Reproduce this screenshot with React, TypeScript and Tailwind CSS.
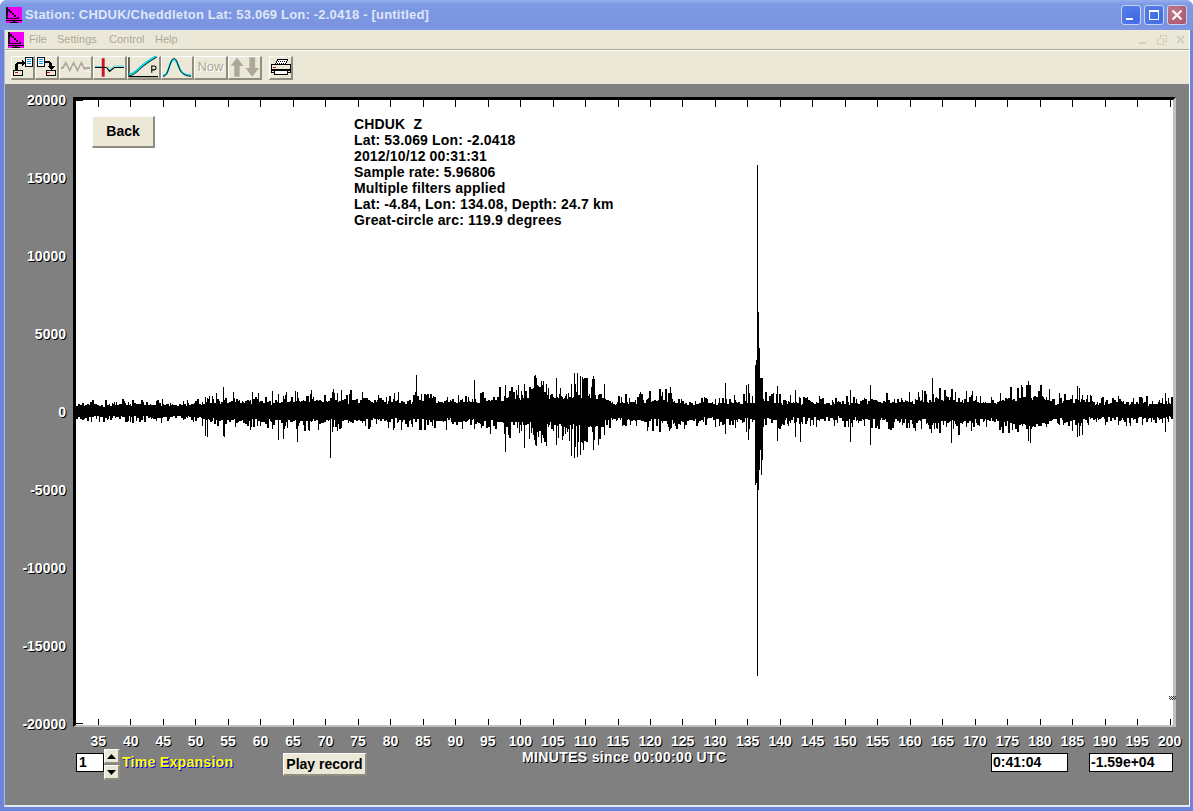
import React, { useMemo } from 'react';

// envelope control points: x in page px, half height in px
const ENV: [number, number][] = [
  [76, 11], [200, 13], [205, 18], [280, 20], [330, 22], [370, 20], [470, 20], [505, 28], [525, 30],
  [550, 32], [572, 34], [600, 34], [612, 16], [630, 18], [670, 24], [690, 16], [750, 18], [770, 20],
  [800, 15], [870, 18], [930, 22], [950, 26], [990, 16], [1010, 26], [1040, 30], [1055, 17], [1078, 24],
  [1090, 16], [1172, 15],
];

// hand placed peaks: x, top, bottom
const SPIKES: [number, number, number][] = [
  [205, 402, 436], [207, 398, 437], [223, 387, 436], [224, 400, 437], [278, 394, 440], [283, 396, 439],
  [297, 392, 442], [330, 398, 458], [332, 392, 432], [416, 375, 420], [474, 380, 429], [505, 385, 452],
  [524, 384, 448], [534, 376, 440], [535, 375, 445], [536, 378, 446], [541, 381, 443], [546, 384, 446],
  [556, 378, 445], [575, 384, 447], [571, 384, 456], [574, 373, 458], [577, 373, 457], [580, 376, 455],
  [583, 380, 450], [593, 376, 450], [594, 379, 440], [725, 383, 434], [746, 385, 432], [748, 384, 440],
  [755, 365, 485], [756, 360, 483], [757, 165, 676], [758, 312, 490], [759, 348, 470], [760, 378, 450],
  [761, 378, 475], [762, 378, 460], [777, 386, 441], [795, 390, 437], [800, 398, 442], [850, 390, 442],
  [870, 385, 445], [932, 378, 425], [951, 400, 443], [1000, 393, 430], [1028, 381, 441], [1030, 385, 443],
  [1077, 386, 437], [1079, 388, 436], [1082, 395, 435], [1165, 393, 432],
];

const envAt = (x: number) => {
  for (let i = 1; i < ENV.length; i++) {
    if (x <= ENV[i][0]) {
      const [x0, a0] = ENV[i - 1];
      const [x1, a1] = ENV[i];
      return a0 + ((a1 - a0) * (x - x0)) / (x1 - x0);
    }
  }
  return 15;
};

const buildTrace = () => {
  let seed = 20121012;
  const rnd = () => {
    seed = (seed + 0x6d2b79f5) | 0;
    let t = Math.imul(seed ^ (seed >>> 15), 1 | seed);
    t = (t + Math.imul(t ^ (t >>> 7), 61 | t)) ^ t;
    return ((t ^ (t >>> 14)) >>> 0) / 4294967296;
  };
  let d = '';
  let x = 76;
  while (x < 1173) {
    const env = envAt(x);
    const dense = x > 530 && x < 546 ? 8 : 0;
    const core = Math.max(5, env * 0.4) + dense;
    const side = () =>
      rnd() < 0.55
        ? core + (env - core) * Math.pow(rnd(), 1.1)
        : core * (0.8 + rnd() * 0.5) + rnd() * 2;
    const up = Math.round(side());
    const down = Math.round(side());
    const hold = rnd() < 0.45 ? 2 : 1;
    for (let i = 0; i < hold && x < 1173; i++, x++) {
      d += `M${x + 0.5} ${411 - up}V${411 + down}`;
    }
  }
  SPIKES.forEach(([sx, t, b]) => {
    d += `M${sx + 0.5} ${t}V${b}`;
  });
  return d;
};

const xLabels = Array.from({ length: 34 }, (_, i) => 35 + i * 5);
const yLabels = [20000, 15000, 10000, 5000, 0, -5000, -10000, -15000, -20000];
const ticks = xLabels.map((_, i) => Math.round(98 + i * 32.47) + 0.5);

const AppIcon = () => (
  <svg width="16" height="16" viewBox="0 0 16 16" className="shrink-0" shapeRendering="crispEdges">
    <rect width="16" height="16" fill="#f000f0" />
    <path d="M0 0h2v2h2v2h2v2h2v2h2v2h3v2H0z" fill="#000" opacity="0.85" />
    <path d="M2 4h1v1h1v1h2v2h2v2h3v1H2z" fill="#f000f0" />
    <path d="M0 13h16v1H0zM7 14h2v1h3v1H4v-1h3z" fill="#000" />
  </svg>
);

const ToolButton = ({ w, children }: { w: string; children: React.ReactNode }) => (
  <div className={`${w} h-[24px] shrink-0 flex items-center justify-center bg-[#ebe8d8] border-t border-l border-t-white border-l-white border-r-2 border-b-2 border-r-[#8f8d80] border-b-[#8f8d80]`}>
    {children}
  </div>
);

const OpenIcon = () => (
  <svg width="22" height="20" viewBox="0 0 22 20" shapeRendering="crispEdges">
    <rect x="1.5" y="13.5" width="10" height="5" fill="#ebe8d8" stroke="#000" />
    <rect x="3" y="15" width="3" height="1" fill="#e01010" />
    <path d="M3 13V7h1V6h1V5h5V2l4 4-4 4V7H6v6z" fill="#000" />
    <rect x="14.5" y="0.5" width="7" height="9" fill="#fff" stroke="#000" />
    <path d="M16 2h4M16 4h4M16 6h4" stroke="#0090e0" />
  </svg>
);

const SaveIcon = () => (
  <svg width="22" height="20" viewBox="0 0 22 20" shapeRendering="crispEdges">
    <rect x="10.5" y="13.5" width="10" height="5" fill="#ebe8d8" stroke="#000" />
    <rect x="12" y="15" width="3" height="1" fill="#e01010" />
    <rect x="1.5" y="0.5" width="7" height="9" fill="#fff" stroke="#000" />
    <path d="M3 2h4M3 4h4M3 6h4" stroke="#0090e0" />
    <path d="M9 4h6v1h1v1h1v3h3l-4 4-4-4h2V6H9z" fill="#000" />
  </svg>
);

const WaveIcon = () => (
  <svg width="32" height="14" viewBox="0 0 32 14" fill="none">
    <path d="M1 8h2l3-5 4 8 4-8 4 8 4-8 3 6 2-1h4" stroke="#aca899" strokeWidth="2" />
    <path d="M2 9.5h2l2-4 4 8 4-8 4 8 4-8 3 6h6" stroke="#fff" strokeWidth="0.6" />
  </svg>
);

const PickIcon = () => (
  <svg width="32" height="20" viewBox="0 0 32 20" fill="none">
    <path d="M1 10.5h7M13 10.5l3 4 5-4h10" stroke="#000" strokeWidth="1.2" />
    <path d="M1 9.5h7M14 9l2 4 5-4h10" stroke="#00d8e8" strokeWidth="0.8" />
    <rect x="8" y="1" width="3" height="19" fill="#d0102a" />
    <path d="M8 10.5h5" stroke="#000" />
  </svg>
);

const SlopeIcon = () => (
  <svg width="32" height="22" viewBox="0 0 32 22" fill="none">
    <path d="M1 1v20h30" stroke="#000" strokeWidth="1.2" />
    <path d="M1 19c4-1 7-3 11-7s10-8 17-12" stroke="#00d8e8" strokeWidth="2.2" />
    <path d="M1 20.5c4-1 7-3 11-7s10-8 18-13" stroke="#000" strokeWidth="0.9" />
    <path d="M24.5 17V10h2.5a2 2 0 0 1 0 4h-2.5" stroke="#000" strokeWidth="1.1" />
  </svg>
);

const BellIcon = () => (
  <svg width="32" height="22" viewBox="0 0 32 22" fill="none">
    <path d="M1 20c4 0 5-4 7-10s3-7 5-7 3 3 5 8 4 8 13 9" stroke="#00d8e8" strokeWidth="2" />
    <path d="M1 21c4 0 5-5 7-11s3-8 5-8 3 3 5 9 4 9 13 10" stroke="#000" strokeWidth="0.9" />
  </svg>
);

const ArrowsIcon = () => (
  <svg width="32" height="22" viewBox="0 0 32 22">
    <path d="M8 1l7 9h-4v11H5V10H1z" fill="#aca899" />
    <path d="M24 21l7-9h-4V1h-6v11h-4z" fill="#aca899" />
    <path d="M8 1L1 10h4v11" fill="none" stroke="#fff" strokeWidth="0.6" />
  </svg>
);

const PrinterIcon = () => (
  <svg width="20" height="18" viewBox="0 0 20 18" shapeRendering="crispEdges">
    <path d="M6.5 1.5h10l-2 5h-10z" fill="#fff" stroke="#000" />
    <path d="M7 3h7M6 5h7" stroke="#000" strokeDasharray="1 1" />
    <rect x="0.5" y="6.5" width="19" height="8" rx="1" fill="#ebe8d8" stroke="#000" />
    <rect x="2" y="9" width="3" height="1" fill="#e01010" />
    <rect x="3.5" y="12.5" width="13" height="4" fill="#fff" stroke="#000" />
    <rect x="0" y="11" width="20" height="2" fill="#000" />
  </svg>
);

const WinButton = ({ kind }: { kind: 'min' | 'max' | 'close' }) => (
  <div
    className={`w-[20px] h-[20px] rounded-[3px] border border-[#c5d2f5] flex items-center justify-center ${
      kind === 'close'
        ? 'bg-[radial-gradient(circle_at_30%_30%,#c07a8c,#a8506a)]'
        : 'bg-[radial-gradient(circle_at_70%_70%,#3f6ae6,#5a80e6)]'
    }`}
  >
    <svg width="14" height="14" viewBox="0 0 14 14" fill="none" stroke="#fff" shapeRendering="crispEdges">
      {kind === 'min' && <rect x="2" y="10" width="7" height="2" fill="#fff" stroke="none" />}
      {kind === 'max' && (
        <>
          <rect x="2.5" y="2.5" width="9" height="9" />
          <path d="M2 3.5h10" />
        </>
      )}
      {kind === 'close' && <path d="M2.5 2.5l9 9M11.5 2.5l-9 9" strokeWidth="2" shapeRendering="auto" />}
    </svg>
  </div>
);

const MdiGlyphs = () => (
  <div className="ml-auto mr-[1px] flex items-center gap-[5px]">
    <svg width="14" height="14" viewBox="0 0 14 14" fill="none" stroke="#d2cfbf" shapeRendering="crispEdges">
      <rect x="3" y="9" width="7" height="2" fill="#d2cfbf" stroke="none" />
    </svg>
    <svg width="14" height="14" viewBox="0 0 14 14" fill="none" stroke="#d2cfbf" shapeRendering="crispEdges">
      <rect x="2.5" y="5.5" width="6" height="6" />
      <path d="M5.5 5V2.5h6v6H9" />
    </svg>
    <svg width="14" height="14" viewBox="0 0 14 14" fill="none" stroke="#d2cfbf">
      <path d="M3 3l7 7M10 3l-7 7" strokeWidth="2" />
    </svg>
  </div>
);

const GrayLabel = ({ children, className }: { children: React.ReactNode; className?: string }) => (
  <span className={`text-[14px] leading-[16px] font-bold text-white [text-shadow:1px_1px_0_#000] ${className ?? ''}`}>
    {children}
  </span>
);

const SpinButton = ({ up }: { up?: boolean }) => (
  <div className="w-[16px] h-[15px] bg-[#ebe8d8] border-t border-l border-white border-r-2 border-b-2 border-r-[#8f8d80] border-b-[#8f8d80] flex items-center justify-center">
    <svg width="9" height="5" viewBox="0 0 9 5">
      <path d={up ? 'M4.5 0L9 5H0z' : 'M0 0h9L4.5 5z'} fill="#000" />
    </svg>
  </div>
);

const ValueBox = ({ w, children }: { w: string; children: React.ReactNode }) => (
  <div className={`${w} h-[19px] bg-white border border-black px-[1px] text-[14px] leading-[17px] font-bold text-black`}>
    {children}
  </div>
);

const info = [
  'CHDUK  Z',
  'Lat: 53.069 Lon: -2.0418',
  '2012/10/12 00:31:31',
  'Sample rate: 5.96806',
  'Multiple filters applied',
  'Lat: -4.84, Lon: 134.08, Depth: 24.7 km',
  'Great-circle arc: 119.9 degrees',
];

export default function App() {
  const trace = useMemo(buildTrace, []);

  return (
    <div className="w-[1193px] h-[811px] overflow-hidden flex flex-col bg-[#6d84da] rounded-t-[7px] font-['Liberation_Sans',sans-serif]">
      {/* title bar */}
      <div className="h-[30px] shrink-0 flex items-center pl-[6px] pr-[6px] bg-[linear-gradient(180deg,#94aeee_0,#7e9ae4_14%,#7a94e0_85%,#7f98e2_100%)]">
        <AppIcon />
        <span className="ml-[3px] text-[13px] font-bold tracking-[0.2px] text-[#dfe6f8] whitespace-nowrap">
          Station: CHDUK/Cheddleton Lat: 53.069 Lon: -2.0418 - [untitled]
        </span>
        <div className="ml-auto flex gap-[3px]">
          <WinButton kind="min" />
          <WinButton kind="max" />
          <WinButton kind="close" />
        </div>
      </div>

      <div className="flex-1 flex flex-col pl-[4px] pr-[3px] pb-[4px] min-h-0">
        <div className="flex-1 flex flex-col border-l border-r border-b-2 border-l-[#aab8ea] border-r-white border-b-[#e4e8f6] min-h-0">
          {/* menu */}
          <div className="h-[20px] shrink-0 flex items-center pl-[3px] bg-[#ebe8d8] border-b border-b-[#aca899]">
            <AppIcon />
            <div className="ml-[5px] flex text-[11px] text-[#aca899]">
              <span className="w-[28px]">File</span>
              <span className="w-[52px]">Settings</span>
              <span className="w-[46px]">Control</span>
              <span>Help</span>
            </div>
            <MdiGlyphs />
          </div>

          {/* toolbar */}
          <div className="h-[34px] shrink-0 flex items-center pl-[6px] bg-[#ebe8d8] border-t border-t-white">
            <ToolButton w="w-[24px]"><OpenIcon /></ToolButton>
            <ToolButton w="w-[24px]"><SaveIcon /></ToolButton>
            <ToolButton w="w-[34px]"><WaveIcon /></ToolButton>
            <ToolButton w="w-[34px]"><PickIcon /></ToolButton>
            <ToolButton w="w-[34px]"><SlopeIcon /></ToolButton>
            <ToolButton w="w-[33px]"><BellIcon /></ToolButton>
            <ToolButton w="w-[34px]">
              <span className="text-[13px] text-[#aca899] [text-shadow:1px_1px_0_#fff]">Now</span>
            </ToolButton>
            <ToolButton w="w-[34px]"><ArrowsIcon /></ToolButton>
            <div className="w-[7px]" />
            <ToolButton w="w-[24px]"><PrinterIcon /></ToolButton>
          </div>

          {/* plot area */}
          <div className="flex-1 min-h-0 bg-[#808080] pt-[13px] flex flex-col">
            <div className="flex h-[630px] shrink-0">
              <div className="w-[61px] mr-[7px] h-[640px] -mt-[5px] flex flex-col justify-between items-end shrink-0">
                {yLabels.map((v) => (
                  <GrayLabel key={v} className="block h-[16px]">{v}</GrayLabel>
                ))}
              </div>
              <div className="relative w-[1103px] h-[630px] shrink-0 bg-white border-t-[3px] border-l-[3px] border-r-[3px] border-b-[2px] border-t-black border-l-black border-r-[#c0c0c0] border-b-[#c0c0c0]">
                <svg width="1097" height="625" viewBox="76 100 1097 625" className="block overflow-visible" shapeRendering="crispEdges">
                  <path d="M76 100.5h7M76 723.5h7" stroke="#000" />
                  {ticks.map((x) => (
                    <path key={x} d={`M${x} 100V107M${x} 719V725`} stroke="#000" />
                  ))}
                  <path d={trace} stroke="#000" strokeWidth="1" fill="none" />
                  <path d="M1169 696.5h7M1170 697.5h6M1169 698.5h7M1170 699.5h6" stroke="#333" strokeDasharray="1 1" />
                </svg>

                <button className="absolute left-[16px] top-[16px] w-[63px] h-[32px] bg-[#ebe8d8] border-t border-l border-white border-r-2 border-b-2 border-r-[#8f8d80] border-b-[#8f8d80] text-[14px] font-bold text-black">
                  Back
                </button>

                <div className="absolute left-[278px] top-[16px] text-[14px] leading-[16px] font-bold tracking-[0.15px] text-black whitespace-pre">
                  {info.map((line) => (
                    <div key={line}>{line}</div>
                  ))}
                </div>
              </div>
            </div>

            {/* x axis numbers */}
            <div className="flex mt-[6px] h-[16px] pl-[77px] shrink-0">
              {xLabels.map((n) => (
                <GrayLabel key={n} className="w-[32.47px] shrink-0 text-center">{n}</GrayLabel>
              ))}
            </div>

            {/* controls */}
            <div className="flex items-start h-[31px] pl-[71px] shrink-0">
              <div className="w-[28px] h-[19px] mt-[4px] bg-white border border-black px-[2px] text-[14px] leading-[17px] font-bold text-black">1</div>
              <div className="flex flex-col gap-[1px] w-[16px]">
                <SpinButton up />
                <SpinButton />
              </div>
              <span className="w-[113px] ml-[2px] mt-[5px] shrink-0 text-[14px] leading-[16px] font-bold tracking-[0.3px] text-[#ffff00] [text-shadow:1px_1px_0_#0000ff] whitespace-nowrap">
                Time Expansion
              </span>
              <button className="ml-[48px] mt-[4px] w-[84px] h-[23px] shrink-0 bg-[#ebe8d8] border-t border-l border-white border-r-2 border-b-2 border-r-[#8f8d80] border-b-[#8f8d80] text-[14px] leading-[16px] font-bold text-black">
                Play record
              </button>
              <GrayLabel className="ml-[155px] tracking-[0.35px] whitespace-nowrap">
                MINUTES since 00:00:00 UTC
              </GrayLabel>
              <div className="ml-auto mr-[16px] mt-[4px] flex gap-[21px]">
                <ValueBox w="w-[77px]">0:41:04</ValueBox>
                <ValueBox w="w-[84px]">-1.59e+04</ValueBox>
              </div>
            </div>
          </div>
        </div>
      </div>
    </div>
  );
}
